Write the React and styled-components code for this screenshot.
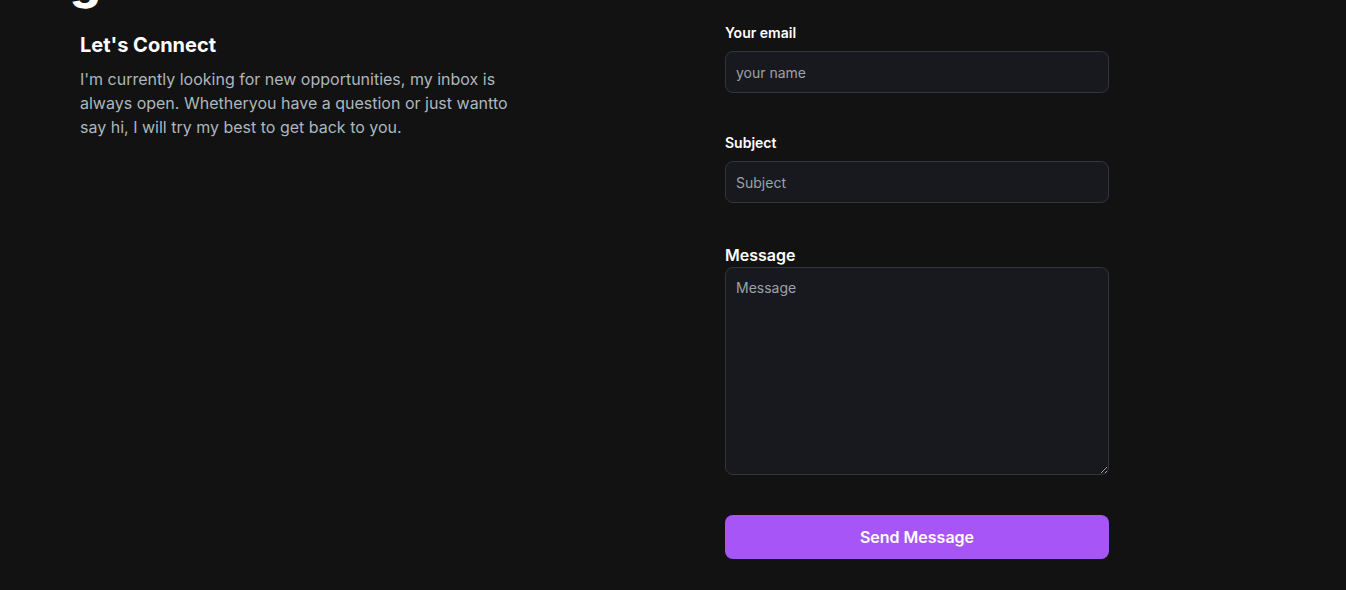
import React from "react";
import styled, { createGlobalStyle } from "styled-components";

const GlobalStyle = createGlobalStyle`
  html, body {
    margin: 0;
    padding: 0;
    background-color: #121212;
    font-family: Inter, "Noto Sans", sans-serif;
    overflow: hidden;
  }
  * {
    box-sizing: border-box;
  }
`;

export default function App() {
  return (
    <>
      <GlobalStyle />
      <Section>
        <BigTitle>get in touch</BigTitle>
        <Grid>
          <Intro>
            <h5>Let's Connect</h5>
            <p>
              I'm currently looking for new opportunities, my inbox is always
              open. Whetheryou have a question or just wantto say hi, I will
              try my best to get back to you.
            </p>
          </Intro>
          <Form onSubmit={(e) => e.preventDefault()}>
            <Field>
              <Label htmlFor="email">Your email</Label>
              <Input id="email" type="email" placeholder="your name" />
            </Field>
            <Field>
              <Label htmlFor="subject">Subject</Label>
              <Input id="subject" type="text" placeholder="Subject" />
            </Field>
            <Field>
              <Label htmlFor="message" big>
                Message
              </Label>
              <TextArea id="message" placeholder="Message" />
            </Field>
            <Button type="submit">Send Message</Button>
          </Form>
        </Grid>
      </Section>
    </>
  );
}

const Section = styled.section`
  padding: 0 48px 0 70px;
`;

const BigTitle = styled.h2`
  margin: -43px 0 18px;
  font-size: 48px;
  line-height: 48px;
  font-weight: 800;
  color: #fff;
`;

const Grid = styled.div`
  display: grid;
  grid-template-columns: 645px 384px;
  padding-left: 10px;
`;

const Intro = styled.div`
  h5 {
    margin: 8px 0;
    font-size: 20px;
    line-height: 28px;
    font-weight: 700;
    color: #fff;
  }
  p {
    margin: 0 0 16px;
    max-width: 448px;
    font-size: 16px;
    line-height: 24px;
    color: #adb7be;
  }
`;

const Form = styled.form`
  display: flex;
  flex-direction: column;
  gap: 40px;
`;

const Field = styled.div`
  display: flex;
  flex-direction: column;
`;

const Label = styled.label`
  display: block;
  color: #fff;
  font-weight: 600;
  font-size: ${(props) => (props.big ? "16px" : "14px")};
  line-height: ${(props) => (props.big ? "24px" : "20px")};
  margin-bottom: ${(props) => (props.big ? "0" : "8px")};
`;

const Input = styled.input`
  width: 100%;
  height: 42px;
  padding: 10px;
  background-color: #18191e;
  border: 1px solid #33353f;
  border-radius: 8px;
  color: #f3f4f6;
  font-family: inherit;
  font-size: 14px;
  line-height: 20px;
  outline: none;
  &::placeholder {
    color: #9ca2a9;
  }
`;

const TextArea = styled.textarea`
  width: 100%;
  height: 208px;
  padding: 10px;
  background-color: #18191e;
  border: 1px solid #33353f;
  border-radius: 8px;
  color: #f3f4f6;
  font-family: inherit;
  font-size: 14px;
  line-height: 20px;
  outline: none;
  &::placeholder {
    color: #9ca2a9;
  }
`;

const Button = styled.button`
  width: 100%;
  height: 44px;
  padding: 10px 20px;
  background-color: #a855f7;
  border: none;
  border-radius: 8px;
  color: #fff;
  font-family: inherit;
  font-size: 16px;
  font-weight: 600;
  cursor: pointer;
`;
